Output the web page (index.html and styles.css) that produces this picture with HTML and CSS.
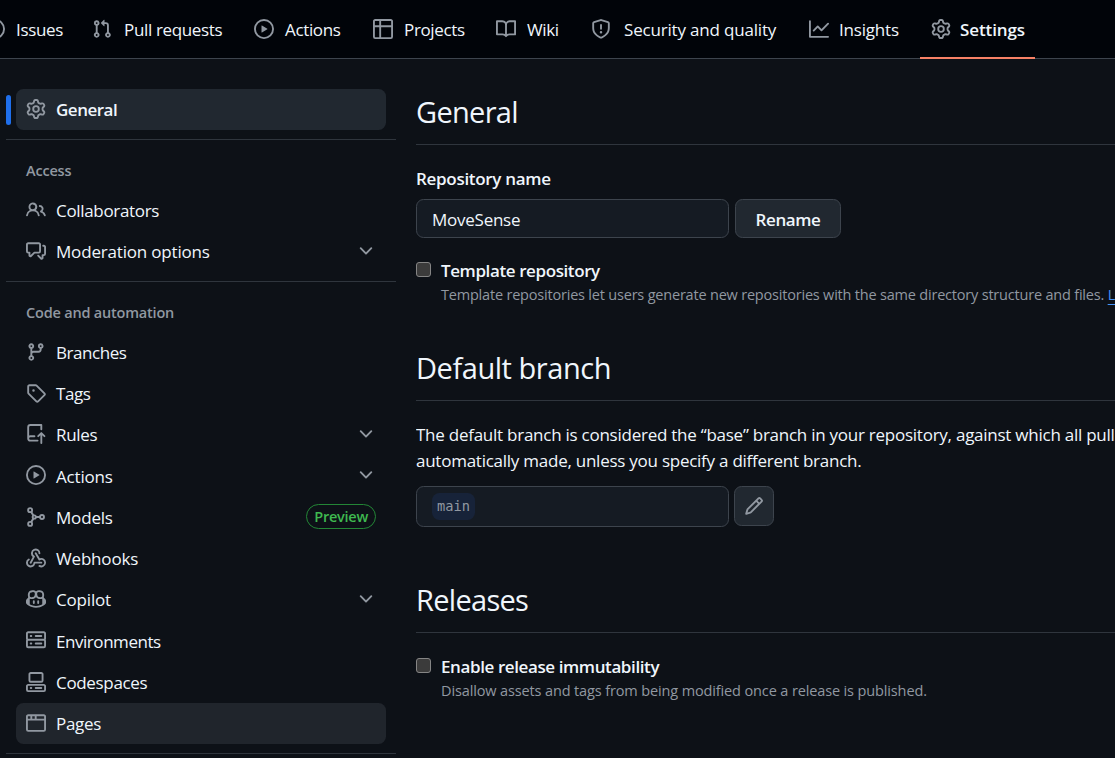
FILE: index.html
```html
<!DOCTYPE html>
<html lang="en">
<head>
<meta charset="utf-8">
<title>Settings</title>
<link rel="stylesheet" href="styles.css">
</head>
<body>
<svg class="sprite" aria-hidden="true">
  <symbol id="issue" viewBox="0 0 16 16"><path d="M8 9.5a1.5 1.5 0 1 0 0-3 1.5 1.5 0 0 0 0 3Z"/><path d="M8 0a8 8 0 1 1 0 16A8 8 0 0 1 8 0ZM1.5 8a6.5 6.5 0 1 0 13 0 6.5 6.5 0 0 0-13 0Z"/></symbol>
  <symbol id="pull" viewBox="0 0 16 16"><path d="M1.5 3.25a2.25 2.25 0 1 1 3 2.122v5.256a2.251 2.251 0 1 1-1.5 0V5.372A2.25 2.25 0 0 1 1.5 3.25Zm5.677-.177L9.573.677A.25.25 0 0 1 10 .854V2.5h1A2.5 2.5 0 0 1 13.5 5v5.628a2.251 2.251 0 1 1-1.5 0V5a1 1 0 0 0-1-1h-1v1.646a.25.25 0 0 1-.427.177L7.177 3.427a.25.25 0 0 1 0-.354ZM3.75 2.5a.75.75 0 1 0 0 1.5.75.75 0 0 0 0-1.5Zm0 9.5a.75.75 0 1 0 0 1.5.75.75 0 0 0 0-1.5Zm8.25.75a.75.75 0 1 0 1.5 0 .75.75 0 0 0-1.5 0Z"/></symbol>
  <symbol id="play" viewBox="0 0 16 16"><path d="M8 0a8 8 0 1 1 0 16A8 8 0 0 1 8 0ZM1.5 8a6.5 6.5 0 1 0 13 0 6.5 6.5 0 0 0-13 0Zm4.879-2.773 4.264 2.559a.25.25 0 0 1 0 .428l-4.264 2.559A.25.25 0 0 1 6 10.559V5.442a.25.25 0 0 1 .379-.215Z"/></symbol>
  <symbol id="table" viewBox="0 0 16 16"><path d="M0 1.75C0 .784.784 0 1.75 0h12.5C15.216 0 16 .784 16 1.75v12.5A1.75 1.75 0 0 1 14.25 16H1.75A1.75 1.75 0 0 1 0 14.25ZM6.5 6.5v8h7.75a.25.25 0 0 0 .25-.25V6.5Zm8-1.5V1.75a.25.25 0 0 0-.25-.25H6.5V5Zm-13 1.5v7.75c0 .138.112.25.25.25H5v-8ZM5 5V1.5H1.75a.25.25 0 0 0-.25.25V5Z"/></symbol>
  <symbol id="book" viewBox="0 0 16 16"><path d="M0 1.75A.75.75 0 0 1 .75 1h4.253c1.227 0 2.317.59 3 1.501A3.743 3.743 0 0 1 11.006 1h4.245a.75.75 0 0 1 .75.75v10.5a.75.75 0 0 1-.75.75h-4.507a2.25 2.25 0 0 0-1.591.659l-.622.621a.75.75 0 0 1-1.06 0l-.622-.621A2.25 2.25 0 0 0 5.258 13H.75a.75.75 0 0 1-.75-.75Zm7.251 10.324.004-5.073-.002-2.253A2.25 2.25 0 0 0 5.003 2.5H1.5v9h3.757a3.75 3.75 0 0 1 1.994.574ZM8.755 4.75l-.004 7.322a3.752 3.752 0 0 1 1.992-.572H14.5v-9h-3.495a2.25 2.25 0 0 0-2.25 2.25Z"/></symbol>
  <symbol id="shield" viewBox="0 0 16 16"><path d="M7.467.133a1.748 1.748 0 0 1 1.066 0l5.25 1.68A1.75 1.75 0 0 1 15 3.48V7c0 1.566-.32 3.182-1.303 4.682-.983 1.498-2.585 2.813-5.032 3.855a1.697 1.697 0 0 1-1.33 0c-2.447-1.042-4.049-2.357-5.032-3.855C1.32 10.182 1 8.566 1 7V3.48a1.75 1.75 0 0 1 1.217-1.667Zm.61 1.429a.25.25 0 0 0-.153 0l-5.25 1.68a.25.25 0 0 0-.174.238V7c0 1.358.275 2.666 1.057 3.86.784 1.194 2.121 2.34 4.366 3.297a.196.196 0 0 0 .154 0c2.245-.956 3.582-2.104 4.366-3.298C13.225 9.666 13.5 8.36 13.5 7V3.48a.251.251 0 0 0-.174-.237l-5.25-1.68ZM8.75 4.75v3a.75.75 0 0 1-1.5 0v-3a.75.75 0 0 1 1.5 0ZM9 10.5a1 1 0 1 1-2 0 1 1 0 0 1 2 0Z"/></symbol>
  <symbol id="graph" viewBox="0 0 16 16"><path d="M1.5 1.75V13.5h13.75a.75.75 0 0 1 0 1.5H.75a.75.75 0 0 1-.75-.75V1.75a.75.75 0 0 1 1.5 0Zm14.28 2.53-5.25 5.25a.75.75 0 0 1-1.06 0L7 7.06 4.28 9.78a.751.751 0 0 1-1.042-.018.751.751 0 0 1-.018-1.042l3.25-3.25a.75.75 0 0 1 1.06 0L10 7.94l4.72-4.72a.751.751 0 0 1 1.042.018.751.751 0 0 1 .018 1.042Z"/></symbol>
  <symbol id="gear" viewBox="0 0 16 16"><path d="M8 0a8.2 8.2 0 0 1 .701.031C9.444.095 9.99.645 10.16 1.29l.288 1.107c.018.066.079.158.212.224.231.114.454.243.668.386.123.082.233.09.299.071l1.103-.303c.644-.176 1.392.021 1.82.63.27.385.506.792.704 1.218.315.675.111 1.422-.364 1.891l-.814.806c-.049.048-.098.147-.088.294.016.257.016.515 0 .772-.01.147.038.246.088.294l.814.806c.475.469.679 1.216.364 1.891a7.977 7.977 0 0 1-.704 1.217c-.428.61-1.176.807-1.82.63l-1.102-.302c-.067-.019-.177-.011-.3.071a5.909 5.909 0 0 1-.668.386c-.133.066-.194.158-.211.224l-.29 1.106c-.168.646-.715 1.196-1.458 1.26a8.006 8.006 0 0 1-1.402 0c-.743-.064-1.289-.614-1.458-1.26l-.289-1.106c-.018-.066-.079-.158-.212-.224a5.738 5.738 0 0 1-.668-.386c-.123-.082-.233-.09-.299-.071l-1.103.303c-.644.176-1.392-.021-1.82-.63a8.12 8.12 0 0 1-.704-1.218c-.315-.675-.111-1.422.363-1.891l.815-.806c.05-.048.098-.147.088-.294a6.214 6.214 0 0 1 0-.772c.01-.147-.038-.246-.088-.294l-.815-.806C.635 6.045.431 5.298.746 4.623a7.92 7.92 0 0 1 .704-1.217c.428-.61 1.176-.807 1.82-.63l1.102.302c.067.019.177.011.3-.071.214-.143.437-.272.668-.386.133-.066.194-.158.211-.224l.29-1.106C6.009.645 6.556.095 7.299.03 7.53.01 7.764 0 8 0Zm-.571 1.525c-.036.003-.108.036-.137.146l-.289 1.105c-.147.561-.549.967-.998 1.189-.173.086-.34.183-.5.29-.417.278-.97.423-1.529.27l-1.103-.303c-.109-.03-.175.016-.195.045-.22.312-.412.644-.573.99-.014.031-.021.11.059.19l.815.806c.411.406.562.957.53 1.456a4.709 4.709 0 0 0 0 .582c.032.499-.119 1.05-.53 1.456l-.815.806c-.081.08-.073.159-.059.19.162.346.353.677.573.989.02.03.085.076.195.046l1.102-.303c.56-.153 1.113-.008 1.53.27.161.107.328.204.501.29.447.222.85.629.997 1.189l.289 1.105c.029.109.101.143.137.146a6.6 6.6 0 0 0 1.142 0c.036-.003.108-.036.137-.146l.289-1.105c.147-.561.549-.967.998-1.189.173-.086.34-.183.5-.29.417-.278.97-.423 1.529-.27l1.103.303c.109.029.175-.016.195-.045.22-.313.411-.644.573-.99.014-.031.021-.11-.059-.19l-.815-.806c-.411-.406-.562-.957-.53-1.456a4.709 4.709 0 0 0 0-.582c-.032-.499.119-1.05.53-1.456l.815-.806c.081-.08.073-.159.059-.19a6.464 6.464 0 0 0-.573-.989c-.02-.03-.085-.076-.195-.046l-1.102.303c-.56.153-1.113.008-1.53-.27a4.44 4.44 0 0 0-.501-.29c-.447-.222-.85-.629-.997-1.189l-.289-1.105c-.029-.11-.101-.143-.137-.146a6.6 6.6 0 0 0-1.142 0ZM11 8a3 3 0 1 1-6 0 3 3 0 0 1 6 0ZM9.5 8a1.5 1.5 0 1 0-3.001.001A1.5 1.5 0 0 0 9.5 8Z"/></symbol>
  <symbol id="people" viewBox="0 0 16 16"><path d="M2 5.5a3.5 3.5 0 1 1 5.898 2.549 5.508 5.508 0 0 1 3.034 4.084.75.75 0 1 1-1.482.235 4 4 0 0 0-7.9 0 .75.75 0 0 1-1.482-.236A5.507 5.507 0 0 1 3.102 8.05 3.493 3.493 0 0 1 2 5.5ZM11 4a3.001 3.001 0 0 1 2.22 5.018 5.01 5.01 0 0 1 2.56 3.012.749.749 0 0 1-.885.954.752.752 0 0 1-.549-.514 3.507 3.507 0 0 0-2.522-2.372.75.75 0 0 1-.574-.73v-.352a.75.75 0 0 1 .416-.672A1.5 1.5 0 0 0 11 5.5.75.75 0 0 1 11 4Zm-5.5-.5a2 2 0 1 0-.001 3.999A2 2 0 0 0 5.5 3.5Z"/></symbol>
  <symbol id="discussion" viewBox="0 0 16 16"><path d="M1.75 1h8.5c.966 0 1.75.784 1.75 1.75v5.5A1.75 1.75 0 0 1 10.25 10H7.061l-2.574 2.573A1.458 1.458 0 0 1 2 11.543V10h-.25A1.75 1.75 0 0 1 0 8.25v-5.5C0 1.784.784 1 1.75 1ZM1.5 2.75v5.5c0 .138.112.25.25.25h1a.75.75 0 0 1 .75.75v2.19l2.72-2.72a.749.749 0 0 1 .53-.22h3.5a.25.25 0 0 0 .25-.25v-5.5a.25.25 0 0 0-.25-.25h-8.5a.25.25 0 0 0-.25.25Zm13 2a.25.25 0 0 0-.25-.25h-.5a.75.75 0 0 1 0-1.5h.5c.966 0 1.75.784 1.75 1.75v5.5A1.75 1.75 0 0 1 14.25 12H14v1.543a1.458 1.458 0 0 1-2.487 1.03L9.22 12.28a.749.749 0 0 1 .326-1.275.749.749 0 0 1 .734.215l2.22 2.22v-2.19a.75.75 0 0 1 .75-.75h1a.25.25 0 0 0 .25-.25Z"/></symbol>
  <symbol id="branch" viewBox="0 0 16 16"><path d="M9.5 3.25a2.25 2.25 0 1 1 3 2.122V6A2.5 2.5 0 0 1 10 8.5H6a1 1 0 0 0-1 1v1.128a2.251 2.251 0 1 1-1.5 0V5.372a2.25 2.25 0 1 1 1.5 0v1.836A2.493 2.493 0 0 1 6 7h4a1 1 0 0 0 1-1v-.628A2.25 2.25 0 0 1 9.5 3.25Zm-6 0a.75.75 0 1 0 1.5 0 .75.75 0 0 0-1.5 0Zm8.25-.75a.75.75 0 1 0 0 1.5.75.75 0 0 0 0-1.5ZM4.25 12a.75.75 0 1 0 0 1.5.75.75 0 0 0 0-1.5Z"/></symbol>
  <symbol id="tag" viewBox="0 0 16 16"><path d="M1 7.775V2.75C1 1.784 1.784 1 2.75 1h5.025c.464 0 .91.184 1.238.513l6.25 6.25a1.75 1.75 0 0 1 0 2.474l-5.026 5.026a1.75 1.75 0 0 1-2.474 0l-6.25-6.25A1.752 1.752 0 0 1 1 7.775Zm1.5 0c0 .066.026.13.073.177l6.25 6.25a.25.25 0 0 0 .354 0l5.025-5.025a.25.25 0 0 0 0-.354l-6.25-6.25a.25.25 0 0 0-.177-.073H2.75a.25.25 0 0 0-.25.25ZM6 5a1 1 0 1 1 0 2 1 1 0 0 1 0-2Z"/></symbol>
  <symbol id="push" viewBox="0 0 16 16"><path d="M1 2.5A2.5 2.5 0 0 1 3.5 0h8.75a.75.75 0 0 1 .75.75v3.5a.75.75 0 0 1-1.5 0V1.5h-8a1 1 0 0 0-1 1v6.708A2.493 2.493 0 0 1 3.5 9h3.25a.75.75 0 0 1 0 1.5H3.5a1 1 0 0 0 0 2h5.75a.75.75 0 0 1 0 1.5H3.5A2.5 2.5 0 0 1 1 11.5Zm13.23 7.79h-.001l-1.224-1.224v6.184a.75.75 0 0 1-1.5 0V9.066L10.28 10.29a.75.75 0 0 1-1.06-1.061l2.505-2.504a.75.75 0 0 1 1.06 0L15.29 9.23a.751.751 0 0 1-.018 1.042.751.751 0 0 1-1.042.018Z"/></symbol>
  <symbol id="model" viewBox="0 0 16 16"><g fill="none" stroke="currentColor" stroke-width="1.5"><circle cx="3.3" cy="2.5" r="1.6"/><circle cx="12.8" cy="8" r="1.6"/><circle cx="3.3" cy="13.5" r="1.6"/><circle cx="6.6" cy="8" r="1.3"/><path d="M4.1 3.9 6 6.9M4.1 12.1 6 9.1M7.9 8h3.3"/></g></symbol>
  <symbol id="webhook" viewBox="0 0 16 16"><path d="M5.5 4.25a2.25 2.25 0 0 1 4.5 0 .75.75 0 0 0 1.5 0 3.75 3.75 0 1 0-6.14 2.889l-2.272 4.258a.75.75 0 0 0 1.324.706L7 7.25a.75.75 0 0 0-.309-1.015A2.25 2.25 0 0 1 5.5 4.25Z"/><path d="M7.364 3.607a.75.75 0 0 1 1.03.257l2.608 4.349a3.75 3.75 0 1 1-.628 6.785.75.75 0 0 1 .752-1.299 2.25 2.25 0 1 0-.033-3.88.75.75 0 0 1-1.03-.256L7.107 4.636a.75.75 0 0 1 .257-1.03Z"/><path d="M2.9 8.776A.75.75 0 0 1 2.625 9.8 2.25 2.25 0 1 0 6 11.75a.75.75 0 0 1 .75-.751h5.5a.75.75 0 0 1 0 1.5H7.425a3.751 3.751 0 1 1-5.55-3.998.75.75 0 0 1 1.024.274Z"/></symbol>
  <symbol id="copilot" viewBox="0 0 16 16"><path d="M7.998 15.035c-4.562 0-7.873-2.914-7.998-3.749V9.338c.085-.628.677-1.686 1.588-2.065.013-.07.024-.143.036-.218.029-.183.06-.384.126-.612-.201-.508-.254-1.084-.254-1.656 0-.87.128-1.769.693-2.484.579-.733 1.494-1.124 2.724-1.261 1.206-.134 2.262.034 2.944.765.05.053.096.108.139.165.044-.057.094-.112.143-.165.682-.731 1.738-.899 2.944-.765 1.23.137 2.145.528 2.724 1.261.566.715.693 1.614.693 2.484 0 .572-.053 1.148-.254 1.656.066.228.098.429.126.612.012.076.024.148.037.218.924.385 1.522 1.471 1.591 2.095v1.872c0 .766-3.351 3.795-8.002 3.795Zm0-1.485c2.28 0 4.584-1.11 5.002-1.433V7.862l-.023-.116c-.49.21-1.075.291-1.727.291-1.146 0-2.059-.327-2.71-.991A3.222 3.222 0 0 1 8 6.303a3.24 3.24 0 0 1-.544.743c-.65.664-1.563.991-2.71.991-.652 0-1.236-.081-1.727-.291l-.023.116v4.255c.419.323 2.722 1.433 5.002 1.433ZM6.762 2.83c-.193-.206-.637-.413-1.682-.297-1.019.113-1.479.404-1.713.7-.247.312-.369.789-.369 1.554 0 .793.129 1.171.308 1.371.162.181.519.379 1.442.379.853 0 1.339-.235 1.638-.54.315-.322.527-.827.617-1.553.117-.935-.037-1.395-.241-1.614Zm4.155-.297c-1.044-.116-1.488.091-1.681.297-.204.219-.359.679-.242 1.614.091.726.303 1.231.618 1.553.299.305.784.54 1.638.54.922 0 1.28-.198 1.442-.379.179-.2.308-.578.308-1.371 0-.765-.123-1.242-.37-1.554-.233-.296-.693-.587-1.713-.7Z"/><path d="M6.25 9.037a.75.75 0 0 1 .75.75v1.501a.75.75 0 0 1-1.5 0V9.787a.75.75 0 0 1 .75-.75Zm4.25.75v1.501a.75.75 0 0 1-1.5 0V9.787a.75.75 0 0 1 1.5 0Z"/></symbol>
  <symbol id="server" viewBox="0 0 16 16"><path d="M1.75 1h12.5c.966 0 1.75.784 1.75 1.75v4c0 .372-.116.717-.314 1 .198.283.314.628.314 1v4a1.75 1.75 0 0 1-1.75 1.75H1.75A1.75 1.75 0 0 1 0 12.75v-4c0-.358.109-.707.314-1a1.739 1.739 0 0 1-.314-1v-4C0 1.784.784 1 1.75 1ZM1.5 2.75v4c0 .138.112.25.25.25h12.5a.25.25 0 0 0 .25-.25v-4a.25.25 0 0 0-.25-.25H1.75a.25.25 0 0 0-.25.25Zm.25 5.75a.25.25 0 0 0-.25.25v4c0 .138.112.25.25.25h12.5a.25.25 0 0 0 .25-.25v-4a.25.25 0 0 0-.25-.25ZM7 4.75A.75.75 0 0 1 7.75 4h4.5a.75.75 0 0 1 0 1.5h-4.5A.75.75 0 0 1 7 4.75ZM7.75 10h4.5a.75.75 0 0 1 0 1.5h-4.5a.75.75 0 0 1 0-1.5ZM3 4.75A.75.75 0 0 1 3.75 4h.5a.75.75 0 0 1 0 1.5h-.5A.75.75 0 0 1 3 4.75ZM3.75 10h.5a.75.75 0 0 1 0 1.5h-.5a.75.75 0 0 1 0-1.5Z"/></symbol>
  <symbol id="codespaces" viewBox="0 0 16 16"><path d="M0 11.25c0-.966.784-1.75 1.75-1.75h12.5c.966 0 1.75.784 1.75 1.75v3A1.75 1.75 0 0 1 14.25 16H1.75A1.75 1.75 0 0 1 0 14.25Zm2-9.5C2 .784 2.784 0 3.75 0h8.5C13.216 0 14 .784 14 1.75v5a1.75 1.75 0 0 1-1.75 1.75h-8.5A1.75 1.75 0 0 1 2 6.75Zm1.75-.25a.25.25 0 0 0-.25.25v5c0 .138.112.25.25.25h8.5a.25.25 0 0 0 .25-.25v-5a.25.25 0 0 0-.25-.25Zm-2 9.5a.25.25 0 0 0-.25.25v3c0 .138.112.25.25.25h12.5a.25.25 0 0 0 .25-.25v-3a.25.25 0 0 0-.25-.25Z"/><path d="M7 12.75a.75.75 0 0 1 .75-.75h4.5a.75.75 0 0 1 0 1.5h-4.5a.75.75 0 0 1-.75-.75Zm-4 0a.75.75 0 0 1 .75-.75h.5a.75.75 0 0 1 0 1.5h-.5a.75.75 0 0 1-.75-.75Z"/></symbol>
  <symbol id="browser" viewBox="0 0 16 16"><path d="M0 2.75C0 1.784.784 1 1.75 1h12.5c.966 0 1.75.784 1.75 1.75v10.5A1.75 1.75 0 0 1 14.25 15H1.75A1.75 1.75 0 0 1 0 13.25ZM14.5 6h-13v7.25c0 .138.112.25.25.25h12.5a.25.25 0 0 0 .25-.25Zm-6-3.5v2h6V2.75a.25.25 0 0 0-.25-.25ZM5 2.5v2h2v-2Zm-3.25 0a.25.25 0 0 0-.25.25V4.5h2v-2Z"/></symbol>
  <symbol id="pencil" viewBox="0 0 16 16"><path d="M11.013 1.427a1.75 1.75 0 0 1 2.474 0l1.086 1.086a1.75 1.75 0 0 1 0 2.474l-8.61 8.61c-.21.21-.47.364-.756.445l-3.251.93a.75.75 0 0 1-.927-.928l.929-3.25c.081-.286.235-.547.445-.758l8.61-8.61Zm.176 4.823L9.75 4.81l-6.286 6.287a.253.253 0 0 0-.064.108l-.558 1.953 1.953-.558a.253.253 0 0 0 .108-.064Zm1.238-3.763a.25.25 0 0 0-.354 0L10.811 3.75l1.439 1.44 1.263-1.263a.25.25 0 0 0 0-.354Z"/></symbol>
  <symbol id="chevron" viewBox="0 0 16 16"><path d="M12.78 5.22a.749.749 0 0 1 0 1.06l-4.25 4.25a.749.749 0 0 1-1.06 0L3.22 6.28a.749.749 0 1 1 1.06-1.06L8 8.939l3.72-3.719a.749.749 0 0 1 1.06 0Z"/></symbol>
</svg>

<header class="tabs">
  <a class="tab"><svg class="icon"><use href="#issue"/></svg><span>Issues</span></a>
  <a class="tab tab-wide"><svg class="icon"><use href="#pull"/></svg><span>Pull requests</span></a>
  <a class="tab"><svg class="icon"><use href="#play"/></svg><span>Actions</span></a>
  <a class="tab"><svg class="icon"><use href="#table"/></svg><span>Projects</span></a>
  <a class="tab"><svg class="icon"><use href="#book"/></svg><span>Wiki</span></a>
  <a class="tab tab-security"><svg class="icon"><use href="#shield"/></svg><span>Security and quality</span></a>
  <a class="tab tab-insights"><svg class="icon"><use href="#graph"/></svg><span>Insights</span></a>
  <a class="tab tab-active"><svg class="icon"><use href="#gear"/></svg><span>Settings</span></a>
</header>

<div class="layout">
  <nav class="sidebar">
    <ul class="group">
      <li class="item item-current"><svg class="icon"><use href="#gear"/></svg><span class="label">General</span></li>
    </ul>
    <h3 class="group-title">Access</h3>
    <ul class="group">
      <li class="item"><svg class="icon"><use href="#people"/></svg><span class="label">Collaborators</span></li>
      <li class="item"><svg class="icon"><use href="#discussion"/></svg><span class="label label-long">Moderation options</span><svg class="icon"><use href="#chevron"/></svg></li>
    </ul>
    <h3 class="group-title">Code and automation</h3>
    <ul class="group">
      <li class="item"><svg class="icon"><use href="#branch"/></svg><span class="label label-tight">Branches</span></li>
      <li class="item"><svg class="icon"><use href="#tag"/></svg><span class="label label-tight">Tags</span></li>
      <li class="item"><svg class="icon"><use href="#push"/></svg><span class="label">Rules</span><svg class="icon"><use href="#chevron"/></svg></li>
      <li class="item"><svg class="icon"><use href="#play"/></svg><span class="label label-long">Actions</span><svg class="icon"><use href="#chevron"/></svg></li>
      <li class="item"><svg class="icon"><use href="#model"/></svg><span class="label label-long">Models</span><span class="badge">Preview</span></li>
      <li class="item"><svg class="icon"><use href="#webhook"/></svg><span class="label label-long">Webhooks</span></li>
      <li class="item"><svg class="icon"><use href="#copilot"/></svg><span class="label label-long">Copilot</span><svg class="icon"><use href="#chevron"/></svg></li>
      <li class="item"><svg class="icon"><use href="#server"/></svg><span class="label label-tight">Environments</span></li>
      <li class="item"><svg class="icon"><use href="#codespaces"/></svg><span class="label">Codespaces</span></li>
      <li class="item item-hover"><svg class="icon"><use href="#browser"/></svg><span class="label">Pages</span></li>
    </ul>
    <div class="group-end"></div>
  </nav>

  <main class="content">
    <section class="section section-general">
      <h2 class="title">General</h2>
      <p class="field-label">Repository name</p>
      <div class="row">
        <div class="field">MoveSense</div>
        <div class="button">Rename</div>
      </div>
      <div class="check">
        <span class="box"></span>
        <div>
          <p class="check-label">Template repository</p>
          <p class="note">Template repositories let users generate new repositories with the same directory structure and files. <a class="link">Learn more</a></p>
        </div>
      </div>
    </section>
    <section class="section section-branch">
      <h2 class="title title-branch">Default branch</h2>
      <p class="text">The default branch is considered the “base” branch in your repository, against which all pull<br>automatically made, unless you specify a different branch.</p>
      <div class="row row-branch">
        <div class="field field-branch"><code class="ref">main</code></div>
        <div class="button button-icon"><svg class="icon"><use href="#pencil"/></svg></div>
      </div>
    </section>
    <section class="section">
      <h2 class="title">Releases</h2>
      <div class="check check-release">
        <span class="box"></span>
        <div>
          <p class="check-label">Enable release immutability</p>
          <p class="note note-release">Disallow assets and tags from being modified once a release is published.</p>
        </div>
      </div>
    </section>
  </main>
</div>
</body>
</html>
```
FILE: styles.css
```css
* {
  box-sizing: border-box;
}

html,
body {
  margin: 0;
  height: 758px;
  overflow: hidden;
}

body {
  background: #0d1117;
  color: #f0f6fc;
  font-family: "Open Sans", "Noto Sans", sans-serif;
  font-size: 17px;
  letter-spacing: -0.4px;
}

h2,
h3,
p,
ul {
  margin: 0;
  padding: 0;
}

ul {
  list-style: none;
}

.sprite {
  display: none;
}

.icon {
  flex: none;
  width: 20px;
  height: 20px;
  color: #9198a1;
  fill: currentColor;
}

/* Repository tabs */
.tabs {
  display: grid;
  grid-template-columns: 107px 162px 119px 123px 95px 218px 122px 115px;
  height: 59px;
  margin-left: -26px;
  background: #010409;
  border-bottom: 1px solid #3d444d;
  white-space: nowrap;
}

.tab {
  display: flex;
  align-items: center;
  gap: 11px;
  height: 59px;
  padding: 0 0 1px 11px;
  letter-spacing: -0.35px;
}

.tab-wide {
  gap: 12px;
}

.tab-security {
  gap: 13px;
  letter-spacing: -0.18px;
}

.tab-insights {
  gap: 10px;
  letter-spacing: -0.2px;
}

.tab-active {
  gap: 9px;
  padding-bottom: 0;
  border-bottom: 2px solid #f78166;
  font-weight: 600;
  letter-spacing: -0.1px;
}

.tab-active span {
  padding-top: 1px;
}

/* Page columns */
.layout {
  display: grid;
  grid-template-columns: 390px minmax(0, 1fr);
  gap: 20px;
  padding-left: 6px;
}

.sidebar {
  padding-top: 30px;
}

.group {
  padding: 0 10px;
}

.item {
  display: flex;
  align-items: center;
  gap: 10px;
  height: 41.25px;
  padding: 0 10px;
  border-radius: 7.5px;
}

.item .icon {
  margin-bottom: 1.5px;
}

.label {
  flex: 1;
  letter-spacing: -0.33px;
}

.label-long {
  letter-spacing: -0.18px;
}

.label-tight {
  letter-spacing: -0.45px;
}

.item-current {
  position: relative;
  background: #212830;
  font-weight: 600;
}

.item-current .label {
  letter-spacing: -0.5px;
}

.item-current::before {
  content: "";
  position: absolute;
  left: -10px;
  top: 6px;
  width: 5px;
  height: 30px;
  border-radius: 3px;
  background: #1f6feb;
}

.item-hover {
  background: #20252c;
}

.group-title {
  height: 50.5px;
  margin-top: 9px;
  padding: 21px 20px 0;
  border-top: 1px solid #2f353d;
  color: #9198a1;
  font-size: 14.5px;
  font-weight: 600;
  letter-spacing: -0.2px;
  line-height: 20px;
}

.group-end {
  margin-top: 9px;
  border-top: 1px solid #2f353d;
}

.badge {
  height: 25px;
  margin-bottom: 1.5px;
  padding: 0 7px;
  border: 1px solid #238636;
  border-radius: 13px;
  color: #3fb950;
  font-size: 14.5px;
  font-weight: 600;
  letter-spacing: -0.25px;
  line-height: 23px;
}

/* Settings form */
.content {
  padding-top: 30px;
  overflow: hidden;
}

.title {
  height: 56px;
  border-bottom: 1px solid #2f353d;
  font-size: 29px;
  font-weight: 400;
  letter-spacing: -0.7px;
  line-height: 46px;
}

.title-branch {
  letter-spacing: -0.45px;
}

.section-general {
  height: 256px;
}

.section-branch {
  height: 232px;
}

.field-label {
  padding-top: 22px;
  font-weight: 600;
  letter-spacing: -0.3px;
  line-height: 24px;
}

.row {
  display: flex;
  gap: 6px;
  margin-top: 8px;
}

.field {
  display: flex;
  align-items: center;
  width: 313px;
  height: 39px;
  padding: 1px 15px 0;
  border: 1px solid #3d444d;
  border-radius: 7.5px;
  background: #151b23;
  letter-spacing: -0.25px;
}

.button {
  display: flex;
  align-items: center;
  justify-content: center;
  width: 106px;
  height: 39px;
  padding-top: 1px;
  border: 1px solid #3d444d;
  border-radius: 7.5px;
  background: #212830;
  font-weight: 600;
}

.check {
  display: flex;
  gap: 10px;
  margin-top: 20px;
  white-space: nowrap;
}

.box {
  flex: none;
  width: 15px;
  height: 15px;
  margin-top: 4px;
  border: 1px solid #858585;
  border-radius: 3px;
  background: #3b3b3b;
}

.check-label {
  font-weight: 600;
  line-height: 26px;
}

.note {
  color: #9198a1;
  font-size: 14.5px;
  letter-spacing: -0.2px;
  line-height: 22px;
}

.note-release {
  letter-spacing: -0.13px;
}

.link {
  color: #4493f8;
  text-decoration: underline;
  text-underline-offset: 4px;
}

.text {
  padding-top: 21px;
  letter-spacing: -0.25px;
  line-height: 26.25px;
  white-space: nowrap;
}

.row-branch {
  gap: 5px;
  margin-top: 11.5px;
}

.field-branch {
  height: 41px;
  padding-top: 0;
}

.ref {
  height: 27px;
  padding: 0 5px;
  border-radius: 7.5px;
  background: #172339;
  color: #9198a1;
  font-family: "DejaVu Sans Mono", monospace;
  font-size: 13.7px;
  letter-spacing: 0;
  line-height: 27px;
}

.button-icon {
  width: 40px;
  height: 40px;
  padding: 0;
}

.check-release {
  margin-top: 21px;
}
```
